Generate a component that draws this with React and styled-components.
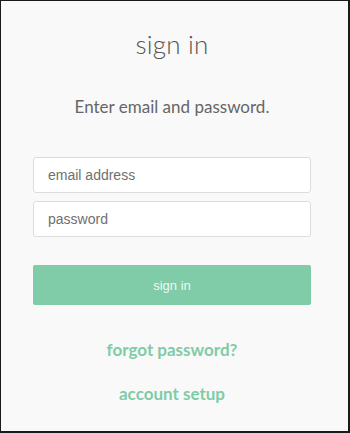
import React from 'react';
import styled, { createGlobalStyle } from 'styled-components';

const GlobalStyle = createGlobalStyle`
  html, body {
    margin: 0;
    padding: 0;
    background: #f9f9f9;
  }
  * {
    box-sizing: border-box;
  }
`;

const Frame = styled.div`
  width: 350px;
  height: 433px;
  border: 1px solid #1a1a1a;
  border-right-width: 2px;
  border-bottom-width: 2px;
  background: #f9f9f9;
  display: flex;
  flex-direction: column;
  align-items: center;
  padding: 26px 37px 0 32px;
  font-family: Lato, "Noto Sans", sans-serif;
`;

const Title = styled.h1`
  margin: 0;
  font-size: 26px;
  font-weight: 300;
  color: #555;
  line-height: 34px;
  letter-spacing: 0.2px;
`;

const Subtitle = styled.p`
  margin: 35px 0 0;
  font-size: 17px;
  font-weight: 400;
  color: #666;
  line-height: 22px;
`;

const Form = styled.form`
  width: 100%;
  margin-top: 39px;
  display: flex;
  flex-direction: column;
  gap: 8px;
`;

const Input = styled.input`
  width: 100%;
  height: 36px;
  border: 1px solid #dcdcdc;
  border-radius: 3px;
  background: #fff;
  padding: 0 14px;
  font-family: "Liberation Sans", Arial, sans-serif;
  font-size: 14px;
  color: #555;
  outline: none;

  &::placeholder {
    color: #707070;
  }
`;

const Button = styled.button`
  width: 100%;
  height: 40px;
  margin-top: 20px;
  border: none;
  border-radius: 2px;
  background: #80cca9;
  color: #eef8f2;
  font-family: "Liberation Sans", Arial, sans-serif;
  font-size: 13px;
  cursor: pointer;
`;

const LinkText = styled.a`
  display: block;
  font-size: 17px;
  font-weight: 700;
  color: #80cba7;
  text-decoration: none;
  margin-top: ${(p) => p.$gap}px;
  line-height: 22px;
`;

export default function App() {
  return (
    <>
      <GlobalStyle />
      <Frame>
        <Title>sign in</Title>
        <Subtitle>Enter email and password.</Subtitle>
        <Form onSubmit={(e) => e.preventDefault()}>
          <Input type="email" placeholder="email address" />
          <Input type="password" placeholder="password" />
          <Button type="submit">sign in</Button>
        </Form>
        <LinkText href="#" $gap={34}>forgot password?</LinkText>
        <LinkText href="#" $gap={22}>account setup</LinkText>
      </Frame>
    </>
  );
}
